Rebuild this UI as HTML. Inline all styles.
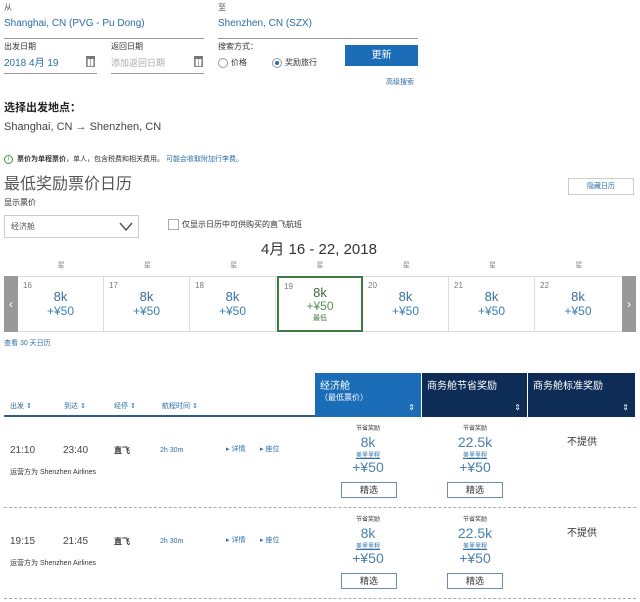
<!DOCTYPE html>
<html><head><meta charset="utf-8"><style>
*{margin:0;padding:0;box-sizing:border-box}
body{width:640px;height:602px;background:#fff;font-family:"Liberation Sans","Noto Sans CJK SC",sans-serif;color:#333;position:relative;overflow:hidden}
.a{position:absolute;white-space:nowrap;line-height:1}
.b{color:#2a6ea8}
.s{font-size:8px}
.ul{position:absolute;height:1px;background:#999}
.cal{position:absolute;width:9px;height:11px;border:1px solid #888;background:repeating-linear-gradient(90deg,#aaa 0 1px,#fff 1px 3px);border-top:3px solid #777}
.radio{position:absolute;width:10px;height:10px;border:1px solid #999;border-radius:50%}
.cell{position:absolute;top:277px;height:54px;width:86px;border-right:1px solid #ddd;text-align:center}
.cell .d{position:absolute;left:5px;top:4px;font-size:8px;color:#777}
.cell .k{position:absolute;left:0;right:0;top:12px;font-size:13px;color:#3a6f9e}
.cell .p{position:absolute;left:0;right:0;top:27px;font-size:12px;color:#3a7fb5}
.hd{position:absolute;top:373px;height:44px;color:#fff;font-size:10px;padding:4px 5px}
.hd .ar{position:absolute;right:6px;bottom:5px;font-size:8px}
.fare{position:absolute;width:90px;text-align:center}
.btn{position:absolute;width:56px;height:16px;border:1px solid #6a8fb0;font-size:9px;text-align:center;line-height:14px;color:#333;background:#fff}
.dash{position:absolute;left:4px;width:632px;border-top:1px dashed #aaa}
</style></head><body>
<div class="a s" style="left:4px;top:4px;color:#555">从</div>
<div class="a b" style="left:4px;top:19px;font-size:10px">Shanghai, CN (PVG - Pu Dong)</div>
<div class="ul" style="left:4px;top:38px;width:200px"></div>
<div class="a s" style="left:218px;top:4px;color:#555">至</div>
<div class="a b" style="left:218px;top:19px;font-size:10px">Shenzhen, CN (SZX)</div>
<div class="ul" style="left:218px;top:38px;width:200px"></div>

<div class="a s" style="left:4px;top:43px">出发日期</div>
<div class="a b" style="left:4px;top:59px;font-size:10px">2018 4月 19</div>
<div class="cal" style="left:86px;top:56px"></div>
<div class="ul" style="left:4px;top:73px;width:93px"></div>
<div class="a s" style="left:111px;top:43px">返回日期</div>
<div class="a s" style="left:111px;top:59px;color:#aaa;font-size:9px">添加返回日期</div>
<div class="cal" style="left:194px;top:56px"></div>
<div class="ul" style="left:111px;top:73px;width:93px"></div>

<div class="a s" style="left:218px;top:43px">搜索方式：</div>
<div class="radio" style="left:218px;top:58px"></div>
<div class="a s" style="left:231px;top:59px">价格</div>
<div class="radio" style="left:272px;top:58px"><div style="position:absolute;left:2px;top:2px;width:4px;height:4px;border-radius:50%;background:#2a6ea8"></div></div>
<div class="a s" style="left:285px;top:59px">奖励旅行</div>
<div class="a" style="left:345px;top:45px;width:73px;height:21px;background:#1a6db6;color:#fff;font-size:10px;text-align:center;line-height:21px">更新</div>
<div class="a b" style="left:386px;top:79px;font-size:7px">高级搜索</div>

<div class="a" style="left:4px;top:103px;font-size:11px;font-weight:bold;color:#222">选择出发地点：</div>
<div class="a" style="left:4px;top:122px;font-size:11px;color:#444">Shanghai, CN → Shenzhen, CN</div>

<div class="a" style="left:4px;top:155px;width:9px;height:9px;border:1px solid #3a9a3a;border-radius:50%;font-size:6px;color:#3a9a3a;text-align:center;line-height:7px">i</div>
<div class="a" style="left:17px;top:156px;font-size:7px"><b>票价为单程票价</b>，单人，包含税费和相关费用。 <span class="b">可能会收取附加行李费。</span></div>

<div class="a" style="left:4px;top:177px;font-size:16px;color:#555">最低奖励票价日历</div>
<div class="a" style="left:568px;top:178px;width:66px;height:17px;border:1px solid #ccc;font-size:7px;text-align:center;line-height:15px;color:#2a6ea8">隐藏日历</div>

<div class="a" style="left:4px;top:199px;font-size:8px">显示票价</div>
<div class="a" style="left:4px;top:215px;width:135px;height:23px;border:1px solid #ccc"><span class="a" style="left:6px;top:7px;font-size:8px;color:#555">经济舱</span>
<svg class="a" style="left:114px;top:6px" width="14" height="9"><path d="M1 1L7 8L13 1" fill="none" stroke="#555" stroke-width="1.5"/></svg></div>
<div class="a" style="left:168px;top:219px;width:11px;height:11px;border:1px solid #aaa"></div>
<div class="a" style="left:182px;top:221px;font-size:8px">仅显示日历中可供购买的直飞航班</div>

<div class="a" style="left:0;width:640px;top:242px;text-align:center;font-size:15px;color:#333;padding-right:2px">4月 16 - 22, 2018</div>
<div class="a" style="left:18px;top:262px;width:604px;display:flex;font-size:7px;color:#888">
<span style="flex:1;text-align:center">星</span><span style="flex:1;text-align:center">星</span><span style="flex:1;text-align:center">星</span><span style="flex:1;text-align:center">星</span><span style="flex:1;text-align:center">星</span><span style="flex:1;text-align:center">星</span><span style="flex:1;text-align:center">星</span></div>

<div class="a" style="left:4px;top:276px;width:632px;height:56px;border:1px solid #ddd"></div>
<div class="a" style="left:4px;top:276px;width:14px;height:56px;background:#999;color:#fff;font-size:12px;line-height:56px;text-align:center">‹</div>
<div class="a" style="left:622px;top:276px;width:14px;height:56px;background:#999;color:#fff;font-size:12px;line-height:56px;text-align:center">›</div>
<div class="cell" style="left:18px"><span class="d">16</span><span class="k">8k</span><span class="p">+¥50</span></div>
<div class="cell" style="left:104px"><span class="d">17</span><span class="k">8k</span><span class="p">+¥50</span></div>
<div class="cell" style="left:190px"><span class="d">18</span><span class="k">8k</span><span class="p">+¥50</span></div>
<div class="cell" style="left:277px;border:2px solid #3d7a3d;width:86px;top:276px;height:56px"><span class="d">19</span><span class="k" style="color:#3d6e3d;top:7px">8k</span><span class="p" style="color:#5a8a5a;top:21px">+¥50</span><span class="a" style="left:0;right:0;top:37px;font-size:7px;color:#3d7a3d;text-align:center">最低</span></div>
<div class="cell" style="left:363px"><span class="d">20</span><span class="k">8k</span><span class="p">+¥50</span></div>
<div class="cell" style="left:449px"><span class="d">21</span><span class="k">8k</span><span class="p">+¥50</span></div>
<div class="cell" style="left:535px;border-right:none"><span class="d">22</span><span class="k">8k</span><span class="p">+¥50</span></div>
<div class="a b" style="left:4px;top:340px;font-size:7px">查看 30 天日历</div>

<div class="a s b" style="left:10px;top:403px;font-size:7px;word-spacing:0">出发 ⇕</div>
<div class="a s b" style="left:64px;top:403px;font-size:7px">到达 ⇕</div>
<div class="a s b" style="left:114px;top:403px;font-size:7px">经停 ⇕</div>
<div class="a s b" style="left:162px;top:403px;font-size:7px">航程时间 ⇕</div>
<div class="a" style="left:4px;top:415px;width:311px;height:2px;background:#2a5d8a"></div>
<div class="hd" style="left:315px;width:106px;background:#1a6db6">经济舱<br><span style="font-size:8px">（最低票价）</span><span class="ar">⇕</span></div>
<div class="hd" style="left:422px;width:105px;background:#0d2d56">商务舱节省奖励<span class="ar">⇕</span></div>
<div class="hd" style="left:528px;width:107px;background:#0d2d56">商务舱标准奖励<span class="ar">⇕</span></div>

<!-- rows -->
<div id="r1">
<div class="a" style="left:10px;top:446px;font-size:10px;color:#444">21:10</div>
<div class="a" style="left:63px;top:446px;font-size:10px;color:#444">23:40</div>
<div class="a" style="left:114px;top:447px;font-size:8px;font-weight:bold">直飞</div>
<div class="a b" style="left:160px;top:447px;font-size:7px">2h 30m</div>
<div class="a b" style="left:226px;top:446px;font-size:7px">▸ 详情</div>
<div class="a b" style="left:260px;top:446px;font-size:7px">▸ 座位</div>
<div class="a" style="left:10px;top:469px;font-size:7px">运营方为 Shenzhen Airlines</div>
<div class="fare" style="left:323px;top:423px"><div style="font-size:6px">节省奖励</div><div style="font-size:14px;color:#4a7fae;margin-top:2px">8k</div><div style="font-size:6px;color:#2a6ea8;text-decoration:underline">美里里程</div><div style="font-size:14px;color:#4a7fae">+¥50</div></div>
<div class="fare" style="left:430px;top:423px"><div style="font-size:6px">节省奖励</div><div style="font-size:14px;color:#4a7fae;margin-top:2px">22.5k</div><div style="font-size:6px;color:#2a6ea8;text-decoration:underline">美里里程</div><div style="font-size:14px;color:#4a7fae">+¥50</div></div>
<div class="btn" style="left:341px;top:482px">精选</div>
<div class="btn" style="left:447px;top:482px">精选</div>
<div class="a" style="left:567px;top:438px;font-size:10px">不提供</div>
</div>
<div class="dash" style="top:507px"></div>

<div class="a" style="left:10px;top:537px;font-size:10px;color:#444">19:15</div>
<div class="a" style="left:63px;top:537px;font-size:10px;color:#444">21:45</div>
<div class="a" style="left:114px;top:538px;font-size:8px;font-weight:bold">直飞</div>
<div class="a b" style="left:160px;top:538px;font-size:7px">2h 30m</div>
<div class="a b" style="left:226px;top:537px;font-size:7px">▸ 详情</div>
<div class="a b" style="left:260px;top:537px;font-size:7px">▸ 座位</div>
<div class="a" style="left:10px;top:560px;font-size:7px">运营方为 Shenzhen Airlines</div>
<div class="fare" style="left:323px;top:514px"><div style="font-size:6px">节省奖励</div><div style="font-size:14px;color:#4a7fae;margin-top:2px">8k</div><div style="font-size:6px;color:#2a6ea8;text-decoration:underline">美里里程</div><div style="font-size:14px;color:#4a7fae">+¥50</div></div>
<div class="fare" style="left:430px;top:514px"><div style="font-size:6px">节省奖励</div><div style="font-size:14px;color:#4a7fae;margin-top:2px">22.5k</div><div style="font-size:6px;color:#2a6ea8;text-decoration:underline">美里里程</div><div style="font-size:14px;color:#4a7fae">+¥50</div></div>
<div class="btn" style="left:341px;top:573px">精选</div>
<div class="btn" style="left:447px;top:573px">精选</div>
<div class="a" style="left:567px;top:529px;font-size:10px">不提供</div>
<div class="dash" style="top:598px"></div>
</body></html>
